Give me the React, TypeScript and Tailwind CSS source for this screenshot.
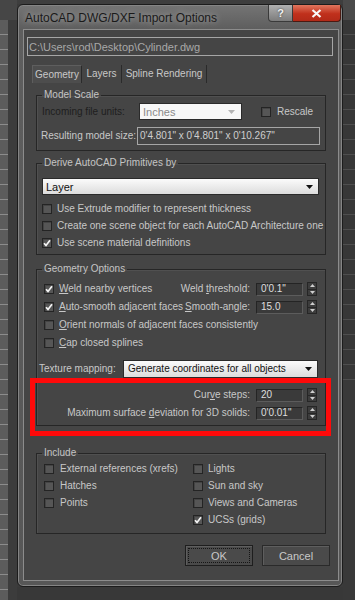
const Check = ({ on }: { on?: boolean }) => (
  <div className="flex h-[10px] w-[10px] shrink-0 items-center justify-center border border-[#242424] bg-[#565656] shadow-[inset_1px_1px_0_#444]">
    {on && (
      <svg width="8" height="8" viewBox="0 0 8 8">
        <path d="M1 4.2L3 6.4L7 1.2" stroke="#f4f4f4" strokeWidth="1.7" fill="none" />
      </svg>
    )}
  </div>
);

const Spinner = () => (
  <div className="ml-[4px] flex h-[14px] w-[10px] flex-col border border-[#262626] bg-[#3d3d3d]">
    <div className="flex flex-1 items-center justify-center border-b border-[#262626]">
      <svg width="5" height="3" viewBox="0 0 5 3">
        <path d="M0 3L2.5 0L5 3Z" fill="#cfcfcf" />
      </svg>
    </div>
    <div className="flex flex-1 items-center justify-center">
      <svg width="5" height="3" viewBox="0 0 5 3">
        <path d="M0 0L2.5 3L5 0Z" fill="#cfcfcf" />
      </svg>
    </div>
  </div>
);

const NumField = ({ value }: { value: string }) => (
  <div className="flex items-center">
    <div className="ml-[6px] flex h-[13px] w-[47px] items-center border border-[#242424] border-b-[#5c5c5c] border-r-[#5c5c5c] bg-[#3a3a3a] pl-[4px] text-[10px] text-[#dedede]">
      {value}
    </div>
    <Spinner />
  </div>
);

const Arrow = ({ color }: { color: string }) => (
  <svg width="7" height="4" viewBox="0 0 7 4">
    <path d="M0 0H7L3.5 4Z" fill={color} />
  </svg>
);

const Group = ({ title, className, children }: { title: string; className: string; children: React.ReactNode }) => (
  <fieldset className={`mx-[12px] border border-[#262626] shadow-[inset_1px_1px_0_#505050] ${className}`}>
    <legend className="ml-[5px] px-[2px] text-[10px] leading-[12px] text-[#c4c4c4]">{title}</legend>
    {children}
  </fieldset>
);

export default function App() {
  return (
    <div className="flex h-[600px] w-[355px] overflow-hidden bg-[#3a3a3a] font-['Liberation_Sans',Arial,sans-serif]">
      {/* desktop behind, left */}
      <div className="flex w-[17px] flex-col">
        <div className="h-[20px] bg-[#464646]" />
        <div className="flex flex-1">
          <div className="w-[8px] bg-[repeating-linear-gradient(180deg,#5c5c5c_0px,#5c5c5c_14px,#8c8c8c_14px,#8c8c8c_15px)]" />
          <div className="w-[9px] bg-[#3c3c3c]" />
        </div>
      </div>

      <div className="flex w-[326px] flex-col">
        <div className="h-[4px] bg-[#3e3e3e]" />
        {/* dialog */}
        <div className="flex h-[583px] flex-col rounded-[6px] border border-[#1c1c1c] bg-[linear-gradient(180deg,#747474_0px,#5e5e5e_24px,#575757_100%)] shadow-[inset_0_0_0_1px_#858585]">
          <div className="flex h-[24px] items-start">
            <div className="pl-[7px] pt-[6px] text-[12px] leading-[14px] text-[#1a1a1a] [text-shadow:0_0_6px_rgba(255,255,255,0.55)]">
              AutoCAD DWG/DXF Import Options
            </div>
            <div className="ml-auto mr-[1px] flex">
              <div className="flex h-[17px] w-[25px] items-center justify-center rounded-bl-[4px] border border-t-0 border-[#3a3a3a] bg-[linear-gradient(180deg,#b0b0b0,#7c7c7c)] text-[11px] font-bold text-[#f2f2f2] [text-shadow:0_0_2px_#333]">
                ?
              </div>
              <div className="flex h-[17px] w-[48px] items-center justify-center rounded-br-[4px] border border-l-0 border-t-0 border-[#4a1a12] bg-[linear-gradient(180deg,#e0765e,#c0301c_55%,#b22a18)]">
                <svg width="11" height="9" viewBox="0 0 11 9">
                  <path d="M1.5 1L9.5 8M9.5 1L1.5 8" stroke="#f8f8f8" strokeWidth="2.2" />
                </svg>
              </div>
            </div>
          </div>

          {/* client area */}
          <div className="relative ml-[5px] mr-[3px] flex flex-1 flex-col border border-[#8c8c8c] bg-[#454545] text-[10px] leading-[12px] text-[#c8c8c8]">
            <div className="ml-[3px] mt-[7px] flex h-[19px] w-[306px] items-center border border-[#a6a6a6] pl-[1px] text-[11px] text-[#a8a8a8]">
              C:\Users\rod\Desktop\Cylinder.dwg
            </div>

            {/* tabs */}
            <div className="ml-[8px] mt-[9px] flex h-[18px]">
              <div className="flex w-[50px] items-center justify-center border-l border-t border-r border-[#5e5e5e] border-r-[#2a2a2a] bg-[#4d4d4d]">Geometry</div>
              <div className="flex w-[40px] items-center justify-center border-r border-[#2a2a2a]">Layers</div>
              <div className="flex w-[85px] items-center justify-center border-r border-[#2a2a2a]">Spline Rendering</div>
            </div>

            {/* Model Scale */}
            <Group title="Model Scale" className="mt-[6px] pb-[5px]">
              <div className="mt-[2px] flex h-[17px] items-center pl-[5px]">
                <div className="w-[97px] text-[#1e1e1e]">Incoming file units:</div>
                <div className="flex h-[17px] w-[103px] items-center justify-between border border-[#2a2a2a] bg-[#f7f7f7] pl-[3px] pr-[6px] text-[11px] text-[#8a8a8a]">
                  Inches
                  <Arrow color="#b4b4b4" />
                </div>
                <div className="ml-[19px]">
                  <Check />
                </div>
                <div className="ml-[6px]">Rescale</div>
              </div>
              <div className="mt-[7px] flex h-[18px] items-center pl-[4px]">
                <div className="w-[96px]">Resulting model size:</div>
                <div className="flex h-[18px] w-[183px] items-center border border-[#a6a6a6] pl-[2px] text-[#cfcfcf]">
                  0'4.801" x 0'4.801" x 0'10.267"
                </div>
              </div>
            </Group>

            {/* Derive */}
            <Group title="Derive AutoCAD Primitives by" className="mt-[6px] pb-[3px]">
              <div className="ml-[5px] mt-[9px] flex h-[17px] w-[277px] items-center justify-between border border-[#2a2a2a] bg-[linear-gradient(180deg,#fbfbfb,#dcdcdc)] pl-[3px] pr-[5px] text-[11px] text-[#111]">
                Layer
                <Arrow color="#111" />
              </div>
              <div className="mt-[5px] flex flex-col pl-[5px]">
                <div className="flex h-[17px] items-center gap-[5px]">
                  <Check />
                  Use Extrude modifier to represent thickness
                </div>
                <div className="flex h-[17px] items-center gap-[5px] whitespace-nowrap">
                  <Check />
                  Create one scene object for each AutoCAD Architecture one
                </div>
                <div className="flex h-[17px] items-center gap-[5px]">
                  <Check on />
                  Use scene material definitions
                </div>
              </div>
            </Group>

            {/* Geometry Options */}
            <Group title="Geometry Options" className="mt-[8px] pb-[3px]">
              <div className="mt-[5px] flex flex-col">
                <div className="flex h-[18px] items-center pl-[7px] pr-[8px]">
                  <Check on />
                  <span className="ml-[5px]">
                    <u>W</u>eld nearby vertices
                  </span>
                  <span className="ml-auto">
                    Weld <u>t</u>hreshold:
                  </span>
                  <NumField value={`0'0.1"`} />
                </div>
                <div className="flex h-[18px] items-center pl-[7px] pr-[8px]">
                  <Check on />
                  <span className="ml-[5px]">
                    <u>A</u>uto-smooth adjacent faces
                  </span>
                  <span className="ml-auto">
                    <u>S</u>mooth-angle:
                  </span>
                  <NumField value="15.0" />
                </div>
                <div className="flex h-[18px] items-center pl-[7px]">
                  <Check />
                  <span className="ml-[5px]">
                    <u>O</u>rient normals of adjacent faces consistently
                  </span>
                </div>
                <div className="flex h-[18px] items-center pl-[7px]">
                  <Check />
                  <span className="ml-[5px]">
                    <u>C</u>ap closed splines
                  </span>
                </div>
                <div className="mt-[8px] flex h-[18px] items-center pl-[2px]">
                  <div className="w-[84px]">Texture mapping:</div>
                  <div className="flex h-[18px] w-[195px] items-center justify-between border border-[#2a2a2a] bg-[linear-gradient(180deg,#fbfbfb,#dcdcdc)] pl-[4px] pr-[5px] text-[#111]">
                    Generate coordinates for all objects
                    <Arrow color="#111" />
                  </div>
                </div>
                <div className="mt-[8px] flex h-[18px] items-center justify-end pr-[8px]">
                  <span>
                    Cur<u>v</u>e steps:
                  </span>
                  <NumField value="20" />
                </div>
                <div className="flex h-[18px] items-center justify-end pr-[8px]">
                  <span>
                    Maximum surface <u>d</u>eviation for 3D solids:
                  </span>
                  <NumField value={`0'0.01"`} />
                </div>
              </div>
            </Group>

            {/* Include */}
            <Group title="Include" className="mt-[21px] pb-[5px]">
              <div className="mt-[1px] grid grid-cols-[149px_1fr] pl-[7px]">
                <div className="flex flex-col">
                  <div className="flex h-[17px] items-center gap-[6px]">
                    <Check />
                    External references (xrefs)
                  </div>
                  <div className="flex h-[17px] items-center gap-[6px]">
                    <Check />
                    Hatches
                  </div>
                  <div className="flex h-[17px] items-center gap-[6px]">
                    <Check />
                    Points
                  </div>
                </div>
                <div className="flex flex-col">
                  <div className="flex h-[17px] items-center gap-[5px]">
                    <Check />
                    Lights
                  </div>
                  <div className="flex h-[17px] items-center gap-[5px]">
                    <Check />
                    Sun and sky
                  </div>
                  <div className="flex h-[17px] items-center gap-[5px]">
                    <Check />
                    Views and Cameras
                  </div>
                  <div className="flex h-[17px] items-center gap-[5px]">
                    <Check on />
                    UCSs (grids)
                  </div>
                </div>
              </div>
            </Group>

            <div className="mr-[8px] mt-[11px] flex justify-end gap-[9px] text-[11px]">
              <div className="flex h-[21px] w-[68px] items-center justify-center border border-[#1e1e1e] bg-[#4a4a4a] p-[2px] shadow-[inset_1px_1px_0_#5e5e5e]">
                <div className="flex h-full w-full items-center justify-center border border-dotted border-[#151515]">OK</div>
              </div>
              <div className="flex h-[21px] w-[68px] items-center justify-center border border-[#2a2a2a] bg-[#4a4a4a] shadow-[inset_1px_1px_0_#5e5e5e]">
                Cancel
              </div>
            </div>

            {/* red annotation box drawn over the dialog */}
            <div className="pointer-events-none absolute left-[6px] top-[348px] h-[58px] w-[301px] border-[5px] border-[#ff0a0a]" />
          </div>
          <div className="h-[5px]" />
        </div>
        <div className="flex-1 bg-[#383838]" />
      </div>

      {/* desktop behind, right */}
      <div className="flex w-[12px] flex-col">
        <div className="h-[20px] bg-[#4a4a4a]" />
        <div className="h-[360px] bg-[repeating-linear-gradient(180deg,#373737_0px,#373737_14px,#4e4e4e_14px,#4e4e4e_15px)]" />
        <div className="flex-1 bg-[#393939]" />
      </div>
    </div>
  );
}
